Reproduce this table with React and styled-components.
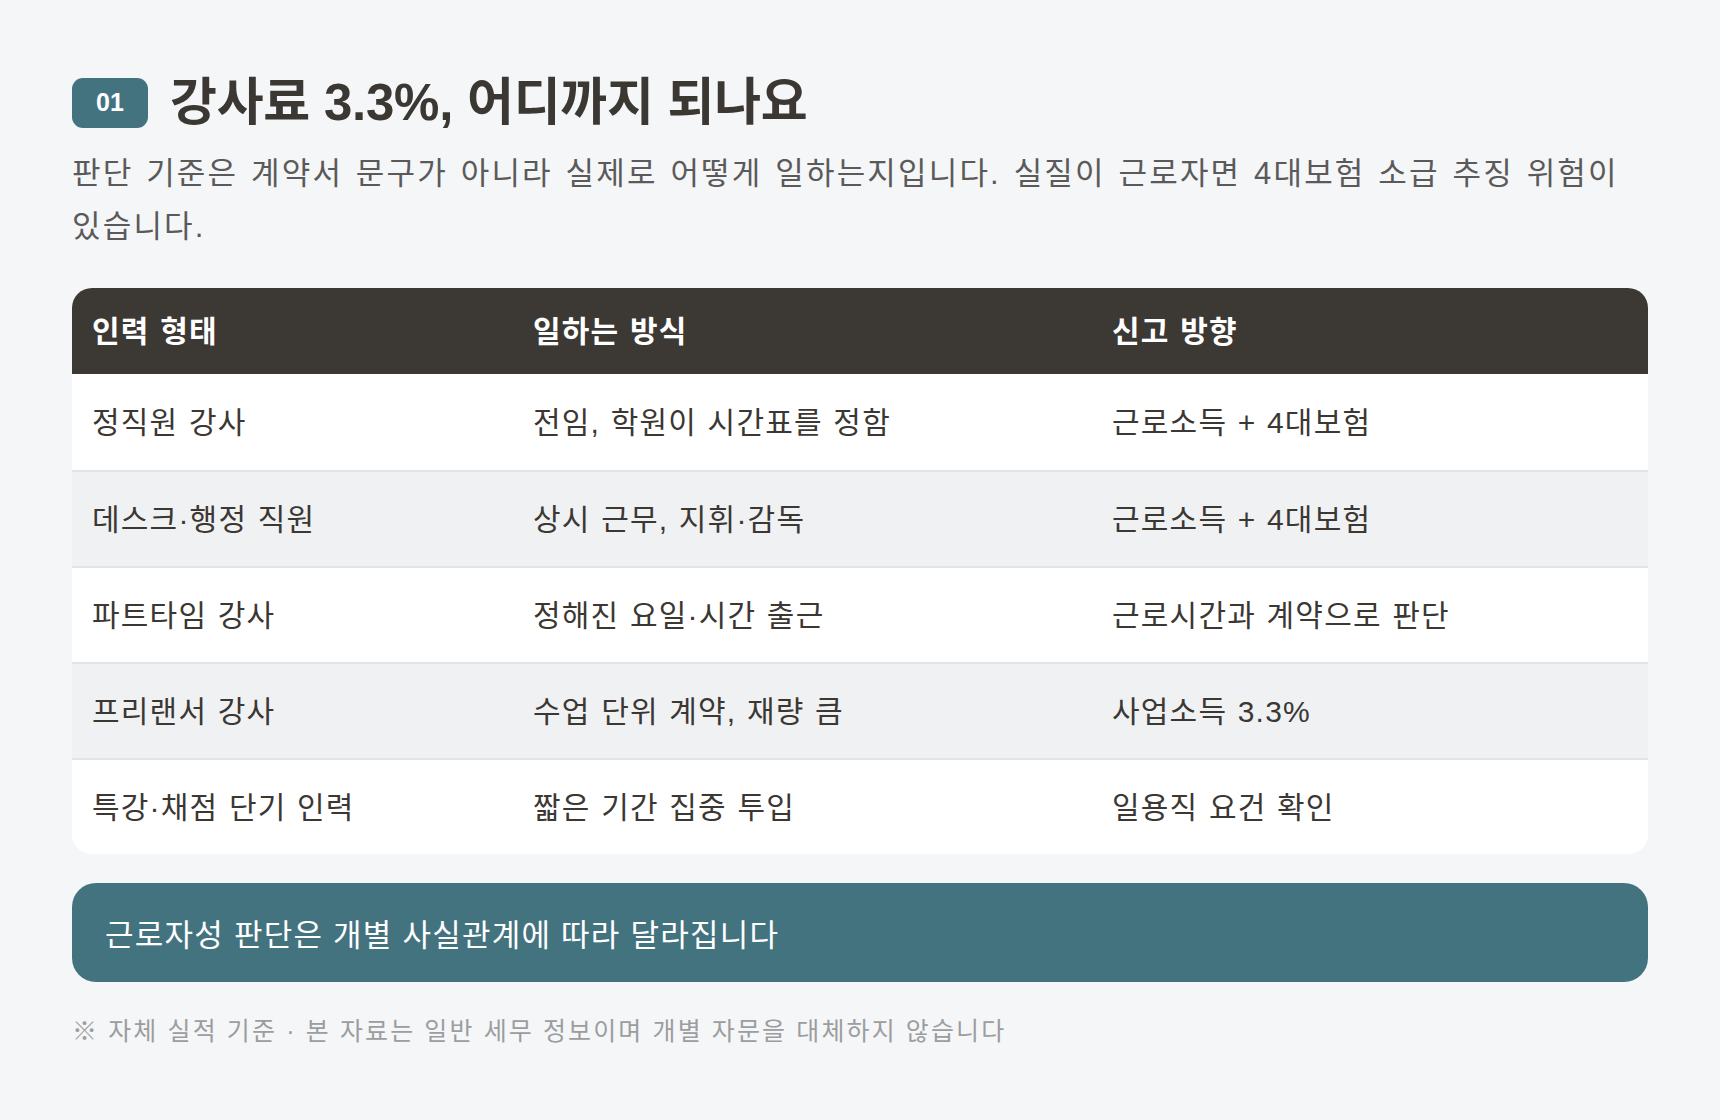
import React from 'react';
import styled, { createGlobalStyle } from 'styled-components';

const GlobalStyle = createGlobalStyle`
  html, body {
    margin: 0;
    padding: 0;
    background: #f5f6f8;
  }
  body {
    font-family: "Liberation Sans", "Noto Sans CJK KR", sans-serif;
    color: #3b3733;
  }
`;

const Page = styled.div`
  width: 1720px;
  min-height: 1120px;
  box-sizing: border-box;
  padding: 76px 72px 0 72px;
`;

const TitleRow = styled.div`
  display: flex;
  align-items: center;
  gap: 22px;
  height: 53px;
`;

const Badge = styled.div`
  width: 76px;
  height: 50px;
  border-radius: 11px;
  background: #43737f;
  color: #fff;
  display: flex;
  align-items: center;
  justify-content: center;
  font-size: 25px;
  font-weight: 700;
`;

const Title = styled.h1`
  margin: 0;
  font-size: 51px;
  font-weight: 700;
  letter-spacing: -0.005em;
  color: #3b3733;
  line-height: 53px;
`;

const Lead = styled.p`
  margin: 18px 0 0 0;
  font-size: 31px;
  line-height: 53px;
  color: #5b5a5a;
  letter-spacing: 0.07em;
  word-spacing: 2px;
`;

const Table = styled.div`
  margin-top: 35px;
  border-radius: 20px;
  overflow: hidden;
  background: #fff;
`;

const Row = styled.div`
  display: grid;
  grid-template-columns: 441px 579px 1fr;
  height: ${p => (p.$head ? '86px' : '96px')};
  align-items: center;
  background: ${p => (p.$head ? '#3c3834' : p.$alt ? '#f0f1f3' : '#fff')};
  border-top: ${p => (p.$head || p.$first ? 'none' : '2px solid #e3e4e6')};
  box-sizing: border-box;
`;

const Cell = styled.div`
  padding: 0 0 5px 20px;
  font-size: 30px;
  font-weight: ${p => (p.$head ? 700 : 400)};
  color: ${p => (p.$head ? '#ffffff' : '#3b3733')};
  letter-spacing: ${p => (p.$head ? '0.04em' : '0.04em')};
  word-spacing: 1px;
`;

const Callout = styled.div`
  margin-top: 29px;
  height: 99px;
  border-radius: 24px;
  background: #43737f;
  color: #fff;
  display: flex;
  align-items: center;
  padding-left: 33px;
  font-size: 31px;
  letter-spacing: 0.04em;
`;

const Footnote = styled.p`
  margin: 31px 0 0 0;
  font-size: 25px;
  line-height: 36px;
  color: #9c9d9f;
  letter-spacing: 0.085em;
`;

const rows = [
  ['정직원 강사', '전임, 학원이 시간표를 정함', '근로소득 + 4대보험'],
  ['데스크·행정 직원', '상시 근무, 지휘·감독', '근로소득 + 4대보험'],
  ['파트타임 강사', '정해진 요일·시간 출근', '근로시간과 계약으로 판단'],
  ['프리랜서 강사', '수업 단위 계약, 재량 큼', '사업소득 3.3%'],
  ['특강·채점 단기 인력', '짧은 기간 집중 투입', '일용직 요건 확인'],
];

const App = () => {
  return (
    <>
      <GlobalStyle />
      <Page>
        <TitleRow>
          <Badge>01</Badge>
          <Title>강사료 3.3%, 어디까지 되나요</Title>
        </TitleRow>
        <Lead>
          판단 기준은 계약서 문구가 아니라 실제로 어떻게 일하는지입니다. 실질이 근로자면 4대보험 소급 추징 위험이 있습니다.
        </Lead>
        <Table>
          <Row $head>
            <Cell $head>인력 형태</Cell>
            <Cell $head>일하는 방식</Cell>
            <Cell $head>신고 방향</Cell>
          </Row>
          {rows.map((r, i) => (
            <Row key={i} $alt={i % 2 === 1} $first={i === 0}>
              {r.map((c, j) => (
                <Cell key={j}>{c}</Cell>
              ))}
            </Row>
          ))}
        </Table>
        <Callout>근로자성 판단은 개별 사실관계에 따라 달라집니다</Callout>
        <Footnote>※ 자체 실적 기준 · 본 자료는 일반 세무 정보이며 개별 자문을 대체하지 않습니다</Footnote>
      </Page>
    </>
  );
};

export default App;
